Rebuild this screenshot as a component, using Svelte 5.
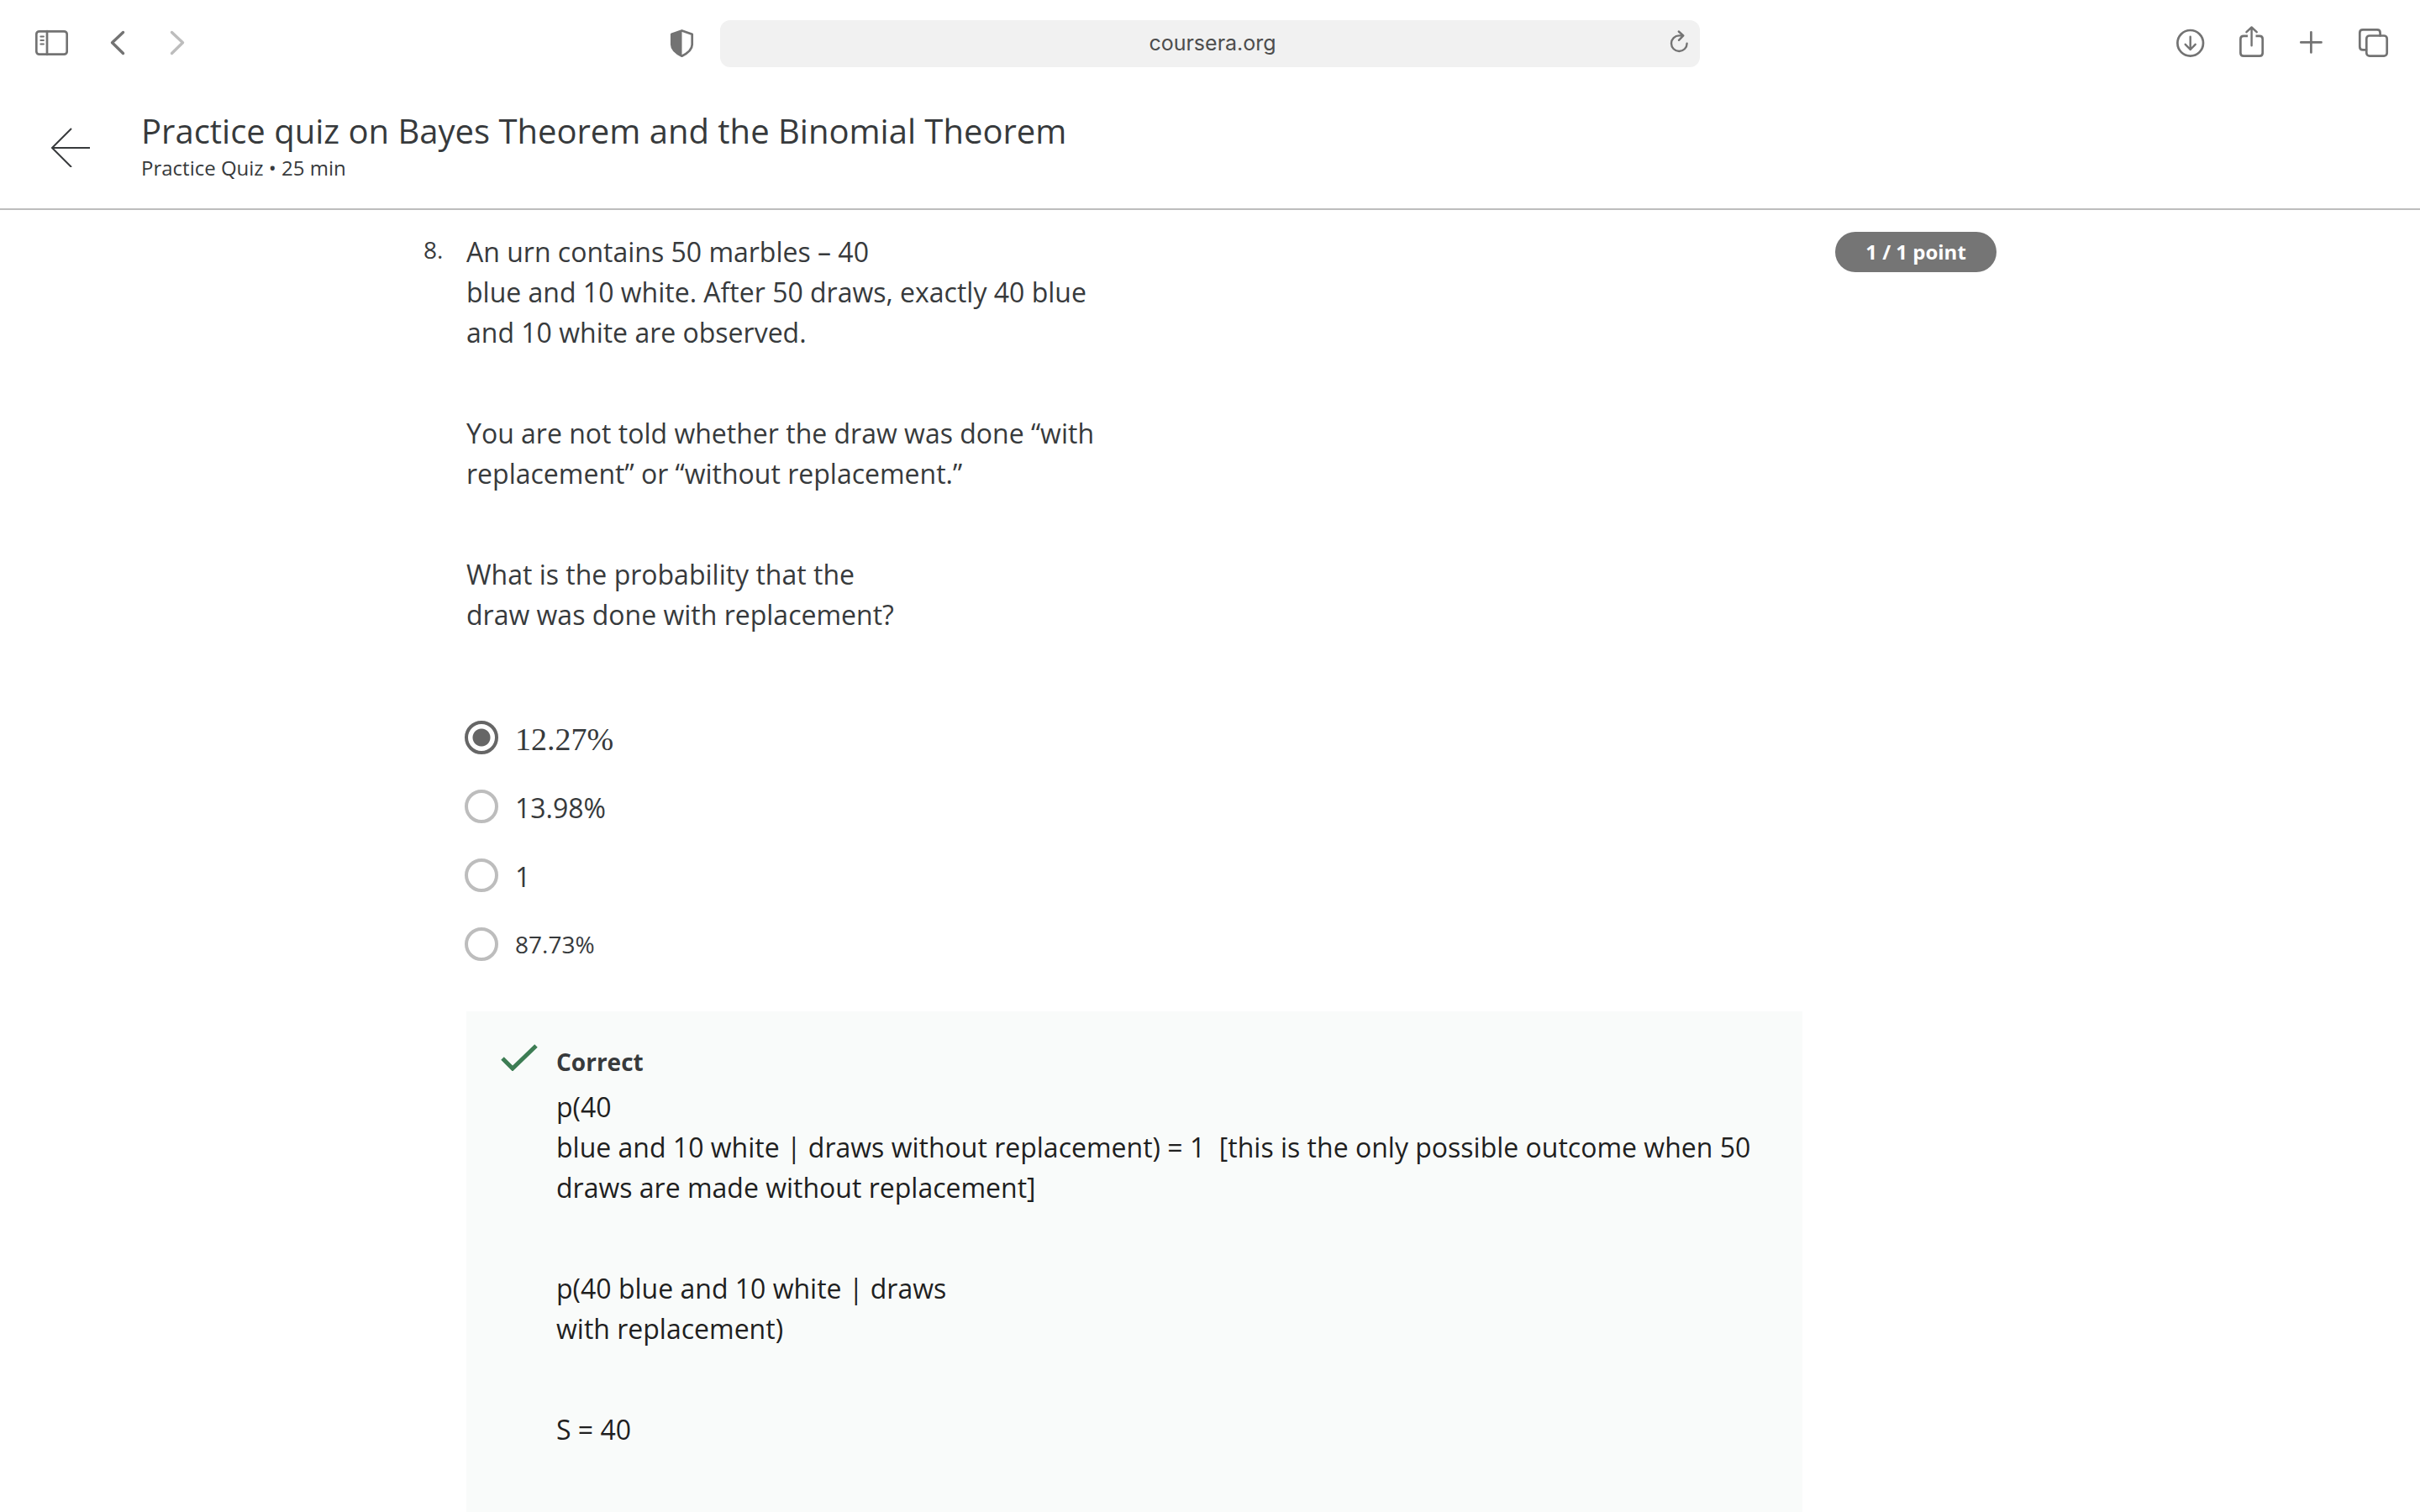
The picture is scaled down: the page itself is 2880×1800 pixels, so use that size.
<script>
  const options = [
    { label: '12.27%', kind: 'math' },
    { label: '13.98%', kind: 'regular' },
    { label: '1', kind: 'regular' },
    { label: '87.73%', kind: 'small' }
  ];
  let selected = $state('12.27%');
</script>

<div class="toolbar">
  <div class="group left">
    <button class="tool" aria-label="Show sidebar">
      <svg class="icon" viewBox="0 0 40 40"><rect x="2.300" y="6.300" width="36.400" height="27.400" rx="3.500" /><path d="M15 6V34" /><path class="thin" d="M7.300 12.500H11M7.300 17H11M7.300 21.500H11" /></svg>
    </button>
    <button class="tool" aria-label="Back">
      <svg class="icon bold" viewBox="0 0 40 40"><path d="M26.500 7.500L13.500 19.800L26.500 32.500" /></svg>
    </button>
    <button class="tool" aria-label="Forward" disabled>
      <svg class="icon bold" viewBox="0 0 40 40"><path d="M13.500 7.500L26.500 19.800L13.500 32.500" /></svg>
    </button>
  </div>
  <div class="center">
    <button class="tool" aria-label="Privacy report">
      <svg class="icon" viewBox="0 0 40 40"><path d="M19.500 5.400L31.700 9.800V22C31.700 28 26 32.500 19.500 35.700C13 32.500 7.300 28 7.300 22V9.800Z" /><path class="solid" d="M19.500 5L7 10V22C7 28 13 32.500 19.500 36Z" /></svg>
    </button>
    <div class="address">
      <input aria-label="Address" value="coursera.org" />
      <button class="reload" aria-label="Reload">
        <svg class="icon light" viewBox="0 0 40 40"><path d="M30.600 19.700A9.300 9.300 0 1 1 21.300 10.400H26M20.800 5.500L26.300 10.400L21 15.800" /></svg>
      </button>
    </div>
  </div>
  <div class="group right">
    <button class="tool" aria-label="Downloads">
      <svg class="icon" viewBox="0 0 40 40"><circle cx="18.700" cy="20.300" r="15.300" /><path class="fine" d="M18.700 12.800V28M12.700 21.800L18.700 28L24.700 21.800" /></svg>
    </button>
    <button class="tool" aria-label="Share">
      <svg class="icon" viewBox="0 0 40 40"><path stroke-linecap="butt" d="M15 11.800H10Q6.400 11.800 6.400 15.400V32.100Q6.400 35.700 10 35.700H29.100Q32.700 35.700 32.700 32.100V15.400Q32.700 11.800 29.100 11.800H24.500" /><path class="fine" d="M19.600 23.300V1.500M13.500 7.200L19.600 1.500L25.700 7.200" /></svg>
    </button>
    <button class="tool" aria-label="New tab">
      <svg class="icon" viewBox="0 0 40 40"><path d="M18.400 7.300V31.500M6.300 19.400H30.500" /></svg>
    </button>
    <button class="tool" aria-label="Show tabs">
      <svg class="icon" viewBox="0 0 40 40"><rect x="12.300" y="11.500" width="24.400" height="24.200" rx="3.600" /><path d="M12 28.300H8Q4.300 28.300 4.300 24.700V7.900Q4.300 4.300 8 4.300H25Q28.600 4.300 28.600 7.900V11.500" /></svg>
    </button>
  </div>
</div>

<header>
  <a class="back" href="#course" aria-label="Back to course">
    <svg viewBox="0 0 48 48"><path d="M47 25H2M25 2L2 25L25 48" /></svg>
  </a>
  <div class="heading">
    <h1>Practice quiz on Bayes Theorem and the Binomial Theorem</h1>
    <p>Practice Quiz • 25 min</p>
  </div>
</header>

<main>
  <span class="number">8.</span>
  <div class="question">
    <div class="prose" id="prompt">
      <p>An urn contains 50 marbles – 40<br />blue and 10 white. After 50 draws, exactly 40 blue<br />and 10 white are observed.</p>
      <p>You are not told whether the draw was done “with<br />replacement” or “without replacement.”</p>
      <p>What is the probability that the<br />draw was done with replacement?</p>
    </div>
    <div class="options" role="radiogroup" aria-labelledby="prompt">
      {#each options as option}
        <label>
          <input type="radio" name="answer" value={option.label} bind:group={selected} />
          <span class={option.kind}>{option.label}</span>
        </label>
      {/each}
    </div>
    <section class="feedback">
      <svg class="check" viewBox="0 0 44 32"><path d="M2 17L14 29L42 2" /></svg>
      <div>
        <h2>Correct</h2>
        <div class="prose">
          <p>p(40<br />blue and 10 white | draws without replacement) = 1&nbsp; [this is the only possible outcome when 50 draws are made without replacement]</p>
          <p>p(40 blue and 10 white | draws<br />with replacement)</p>
          <p>S = 40</p>
        </div>
      </div>
    </section>
  </div>
  <span class="points">1 / 1 point</span>
</main>

<style>
  :global(body) {
    background: #fff;
    color: #373a3c;
    font-family: "Open Sans", sans-serif;
    overflow: hidden;
  }
  :global(#app) {
    height: 100vh;
    display: flex;
    flex-direction: column;
    overflow: hidden;
  }
  h1, h2, p { margin: 0; font-weight: 400; }
  button {
    border: 0;
    padding: 0;
    background: none;
    color: #737373;
    display: flex;
  }
  button:disabled { color: #bdbdbd; }
  .toolbar {
    flex: none;
    display: grid;
    grid-template-columns: 1fr auto 1fr;
    align-items: center;
    height: 102px;
    padding: 0 36px;
  }
  .group { display: flex; align-items: center; }
  .left { gap: 31px; padding-left: 5px; }
  .left .tool:first-child { margin-right: 8px; }
  .right { justify-content: flex-end; gap: 32px; }
  .center {
    display: flex;
    align-items: center;
    gap: 25px;
    margin-left: -65px;
  }
  .icon {
    width: 40px;
    height: 40px;
    fill: none;
    stroke: currentColor;
    stroke-width: 2.7;
    stroke-linecap: round;
    stroke-linejoin: round;
  }
  .bold { stroke-width: 3.4; }
  .light, .fine { stroke-width: 2.4; }
  .thin { stroke-width: 1.8; }
  .solid { fill: currentColor; stroke: none; }
  .address {
    position: relative;
    width: 1166px;
    height: 56px;
    margin-top: 2px;
  }
  .address input {
    box-sizing: border-box;
    width: 100%;
    height: 100%;
    border: 0;
    border-radius: 12px;
    padding: 0 0 2px 6px;
    background: #f1f1f1;
    color: #4d4d4d;
    font: 25px Inter, sans-serif;
    text-align: center;
  }
  .reload { position: absolute; top: 8px; right: 6px; }
  header {
    flex: none;
    display: flex;
    align-items: center;
    gap: 60px;
    box-sizing: border-box;
    height: 148px;
    padding: 0 60px;
    border-bottom: 2px solid #bdbdbd;
  }
  .back { display: flex; }
  .back svg {
    width: 48px;
    height: 48px;
    fill: none;
    stroke: #373a3c;
    stroke-width: 2;
  }
  .heading { padding-bottom: 3px; }
  h1 { font-size: 40px; line-height: 52px; }
  header p { font-size: 24px; line-height: 36px; }
  main {
    flex: 1;
    min-height: 0;
    display: grid;
    grid-template-columns: 51px 1fr 192px;
    align-items: start;
    box-sizing: border-box;
    width: 100%;
    max-width: 1872px;
    margin: 0 auto;
    padding-top: 26px;
  }
  .number { font-size: 28px; line-height: 42px; }
  .question { margin-right: 39px; }
  .prose { font-size: 32px; line-height: 48px; }
  .prose p + p { margin-top: 72px; }
  .options {
    display: grid;
    grid-auto-rows: 82px;
    margin-top: 81px;
  }
  label { display: flex; align-items: center; gap: 20px; }
  label input {
    appearance: none;
    box-sizing: border-box;
    width: 40px;
    height: 40px;
    margin: 0 0 0 -2px;
    border: 4px solid #bdbdbd;
    border-radius: 50%;
  }
  label input:checked {
    border-color: #666;
    background: radial-gradient(circle, #666 10px, #fff 11px);
  }
  .math, .regular { padding-top: 3px; }
  .math { font: 38px "Liberation Serif", serif; }
  .regular { font-size: 32px; }
  .small { font-size: 28px; }
  .feedback {
    display: grid;
    grid-template-columns: 44px 1fr;
    gap: 22px;
    min-height: 640px;
    margin-top: 39px;
    padding: 39px 42px 39px 41px;
    background: #f9fbfa;
  }
  .check {
    width: 44px;
    height: 32px;
    fill: none;
    stroke: #3d7d54;
    stroke-width: 5;
  }
  h2 {
    font-size: 28px;
    font-weight: 700;
    line-height: 42px;
    margin-bottom: 9px;
  }
  .feedback .prose { color: #1f1f1f; }
  .points {
    border-radius: 24px;
    background: #757575;
    color: #fff;
    font-size: 24px;
    font-weight: 700;
    line-height: 48px;
    text-align: center;
  }
</style>
